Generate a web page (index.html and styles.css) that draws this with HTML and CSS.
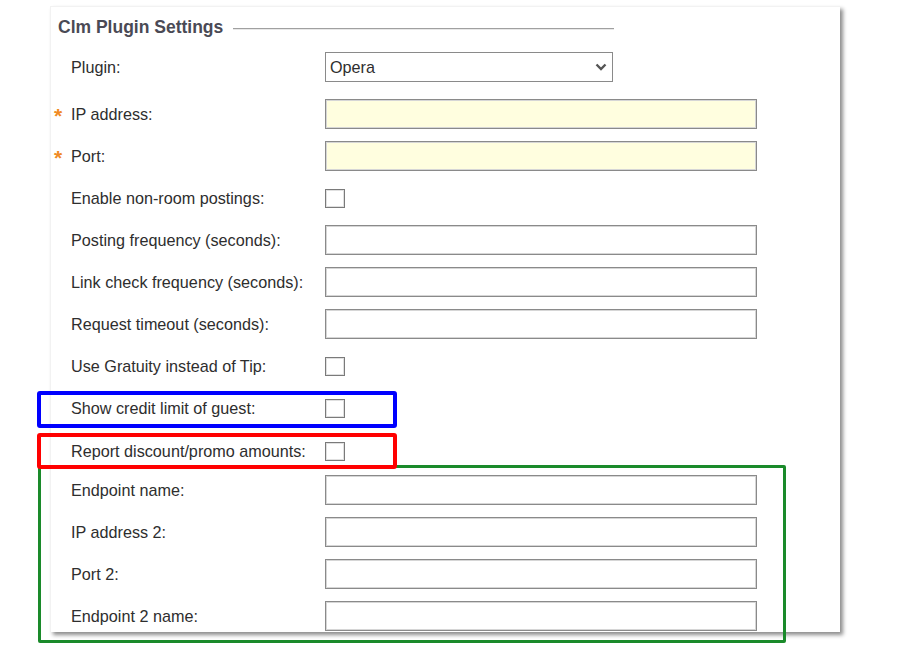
FILE: index.html
```html
<!DOCTYPE html>
<html lang="en">
<head>
    <meta charset="UTF-8">
    <title>Clm Plugin Settings</title>
    <link rel="stylesheet" href="styles.css">
</head>
<body>
    <div class="page">
        <div class="panel">
            <div class="legend">
                <span class="legend-title">Clm Plugin Settings</span>
                <span class="legend-line"></span>
            </div>

            <div class="row row-first">
                <label class="label">Plugin:</label>
                <div class="select-wrap">
                    <select class="select">
                        <option>Opera</option>
                    </select>
                    <svg class="chevron" width="12" height="8" viewBox="0 0 12 8">
                        <path d="M1.5 1.5 L6 6 L10.5 1.5" fill="none" stroke="#555" stroke-width="2.4"/>
                    </svg>
                </div>
            </div>

            <div class="row row-gap">
                <label class="label"><span class="req">*</span>IP address:</label>
                <input class="field required" type="text">
            </div>
            <div class="row">
                <label class="label"><span class="req">*</span>Port:</label>
                <input class="field required" type="text">
            </div>
            <div class="row">
                <label class="label">Enable non-room postings:</label>
                <input class="check" type="checkbox">
            </div>
            <div class="row">
                <label class="label">Posting frequency (seconds):</label>
                <input class="field" type="text">
            </div>
            <div class="row">
                <label class="label">Link check frequency (seconds):</label>
                <input class="field" type="text">
            </div>
            <div class="row">
                <label class="label">Request timeout (seconds):</label>
                <input class="field" type="text">
            </div>
            <div class="row">
                <label class="label">Use Gratuity instead of Tip:</label>
                <input class="check" type="checkbox">
            </div>
            <div class="row">
                <label class="label">Show credit limit of guest:</label>
                <input class="check" type="checkbox">
            </div>
            <div class="row row-check-low">
                <label class="label">Report discount/promo amounts:</label>
                <input class="check" type="checkbox">
            </div>
            <div class="row row-tight">
                <label class="label">Endpoint name:</label>
                <input class="field" type="text">
            </div>
            <div class="row">
                <label class="label">IP address 2:</label>
                <input class="field" type="text">
            </div>
            <div class="row">
                <label class="label">Port 2:</label>
                <input class="field" type="text">
            </div>
            <div class="row">
                <label class="label">Endpoint 2 name:</label>
                <input class="field" type="text">
            </div>
        </div>

        <!-- marcações por cima do formulário -->
        <div class="mark mark-blue"></div>
        <div class="mark mark-green"></div>
        <div class="mark mark-red"></div>
    </div>
</body>
</html>
```

FILE: styles.css
```css
* {
    margin: 0;
    padding: 0;
    box-sizing: border-box;
}

body {
    background: #FFFFFF;
    font-family: 'Liberation Sans', Arial, sans-serif;
    color: #2e2e2e;
}

.page {
    position: relative;
    width: 902px;
    height: 650px;
    overflow: hidden;
    padding: 6px 0 0 50px;
}

.panel {
    width: 790px;
    height: 626px;
    background: #FFFFFF;
    border-top: 1px solid #f2f2f2;
    border-left: 1px solid #f2f2f2;
    box-shadow: 3px 3px 4px rgba(0,0,0,0.45);
    padding: 9px 0 0 7px;
    overflow: hidden;
}

.legend {
    display: flex;
    align-items: center;
    height: 22px;
    width: 556px;
    gap: 10px;
}

.legend-title {
    font-weight: bold;
    font-size: 17.5px;
    color: #4a4a55;
    white-space: nowrap;
}

.legend-line {
    flex: 1;
    height: 2px;
    margin-top: 4px;
    border-top: 1px solid #a0a0a0;
    border-bottom: 1px solid #e8e8e8;
}

.row {
    display: flex;
    align-items: center;
    height: 42px;
}

.row-first {
    margin-top: 8px;
}

.row-gap {
    margin-top: 5px;
}

.row-check-low {
    padding-top: 2px;
}

.row-tight {
    margin-top: -2px;
}

.label {
    position: relative;
    width: 267px;
    padding-left: 13px;
    font-size: 16.2px;
    white-space: nowrap;
}

.req {
    position: absolute;
    left: -4px;
    top: -1px;
    color: #f08a24;
    font-size: 21px;
    font-weight: bold;
}

.field {
    width: 432px;
    height: 30px;
    border: 1px solid #8a8a8a;
    box-shadow: inset 0 0 0 1px #d6d6d6;
    background: #FFFFFF;
    outline: none;
}

.field.required {
    background: #FFFEDF;
}

.check {
    appearance: none;
    width: 20px;
    height: 19px;
    border: 1px solid #7a7a7a;
    box-shadow: inset 0 0 0 1px #e0e0e0;
    background: #FFFFFF;
}

.select-wrap {
    position: relative;
    width: 288px;
    height: 30px;
}

.select {
    appearance: none;
    width: 100%;
    height: 100%;
    border: 1px solid #8a8a8a;
    background: #FFFFFF;
    font-family: 'Liberation Sans', Arial, sans-serif;
    font-size: 16.2px;
    color: #2e2e2e;
    padding-left: 4px;
}

.chevron {
    position: absolute;
    right: 6px;
    top: 11px;
}

.mark {
    position: absolute;
    border-radius: 3px;
}

.mark-blue {
    left: 37px;
    top: 391px;
    width: 360px;
    height: 37px;
    border: 4px solid #0000FF;
}

.mark-red {
    left: 37px;
    top: 433px;
    width: 360px;
    height: 36px;
    border: 4px solid #FF0000;
}

.mark-green {
    left: 38px;
    top: 465px;
    width: 748px;
    height: 178px;
    border: 3px solid #1A8A2A;
    border-radius: 2px;
}
```
